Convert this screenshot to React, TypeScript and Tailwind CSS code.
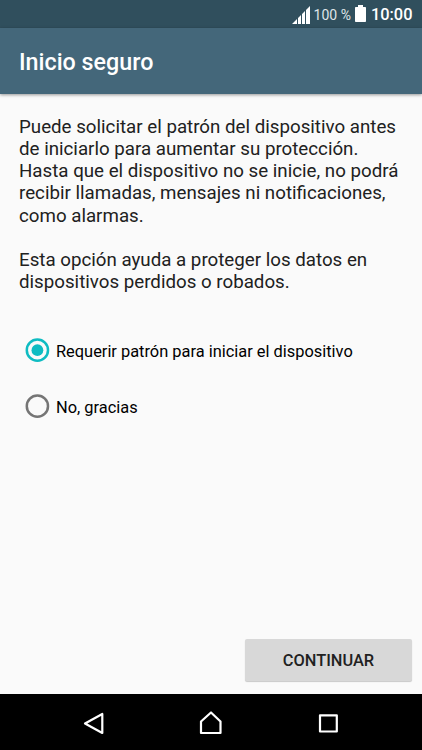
import React from "react";

function SignalIcon() {
  return (
    <svg width="18" height="18" viewBox="0 0 18 18" fill="#fff" className="mt-px shrink-0">
      <path d="M0 18L5 13V18ZM6 12L9 9V18H6ZM10 8L13 5V18H10ZM14 4L18 0V18H14Z" />
    </svg>
  );
}

function BatteryIcon() {
  return (
    <svg width="11" height="17" viewBox="0 0 11 17" fill="#fff" className="shrink-0">
      <path d="M3 0H8V2H10.2Q11 2 11 2.8V16.2Q11 17 10.2 17H0.8Q0 17 0 16.2V2.8Q0 2 0.8 2H3Z" />
    </svg>
  );
}

function Option({ label, selected = false }: { label: string; selected?: boolean }) {
  return (
    <div role="radio" aria-checked={selected} className="flex h-14 items-center pl-[25px]">
      <svg width="25" height="25" viewBox="0 0 25 25" fill="none" className="shrink-0">
        <circle cx="12.4" cy="12.2" r="10.6" stroke={selected ? "#0fbcc2" : "#757575"} strokeWidth="2.5" />
        {selected && <circle cx="12.4" cy="12.2" r="5.9" fill="#0fbcc2" />}
      </svg>
      <span className="ml-[6px] whitespace-nowrap pt-[3px] text-[16.4px] leading-5 text-black">{label}</span>
    </div>
  );
}

export default function App() {
  return (
    <div className="flex h-[750px] w-[422px] flex-col overflow-hidden bg-[#fafafa] font-['Roboto',sans-serif]">
      <div className="flex h-7 shrink-0 items-center justify-end bg-[#304f5d] pr-[9.5px] text-white">
        <SignalIcon />
        <span className="ml-[4px] whitespace-nowrap pt-px text-[14px] leading-5 text-[#dfe5e8]">100 %</span>
        <span className="ml-[4px] flex pb-px">
          <BatteryIcon />
        </span>
        <span className="ml-[5px] pt-[2px] text-[16.4px] font-medium leading-5">10:00</span>
      </div>
      <header className="z-10 flex h-[66px] shrink-0 items-center bg-[#44677a] pl-[19px] shadow-[0_1px_3px_rgba(0,0,0,0.4)]">
        <h1 className="pt-[2px] text-[23.3px] font-medium leading-7 text-white">Inicio seguro</h1>
      </header>
      <main className="flex min-h-0 flex-1 flex-col">
        <div className="whitespace-nowrap pl-[19px] pt-[21.5px] text-[18.73px] leading-[22.25px] text-[#212121]">
          <p>
            Puede solicitar el patrón del dispositivo antes
            <br />
            de iniciarlo para aumentar su protección.
            <br />
            Hasta que el dispositivo no se inicie, no podrá
            <br />
            recibir llamadas, mensajes ni notificaciones,
            <br />
            como alarmas.
          </p>
          <p className="mt-[22.25px]">
            Esta opción ayuda a proteger los datos en
            <br />
            dispositivos perdidos o robados.
          </p>
        </div>
        <div role="radiogroup" className="mt-[28.5px]">
          <Option label="Requerir patrón para iniciar el dispositivo" selected />
          <Option label="No, gracias" />
        </div>
        <div className="mt-auto flex justify-end pb-[13px] pr-[10px]">
          <button className="h-[42px] w-[167px] rounded-[2px] bg-[#d8d8d8] pt-px text-[16.4px] font-medium leading-5 text-[#212121] shadow-[0_1px_1px_rgba(0,0,0,0.2)]">
            CONTINUAR
          </button>
        </div>
      </main>
      <nav className="flex h-14 shrink-0 items-center bg-black pl-[82px]">
        <svg width="24" height="28" viewBox="0 0 24 28" fill="none" stroke="#fff" strokeWidth="2.2" strokeLinejoin="round">
          <path d="M3 15.5L20.3 6V25Z" />
        </svg>
        <svg width="24" height="28" viewBox="0 0 24 28" fill="none" stroke="#fff" strokeWidth="2.2" strokeLinejoin="round" className="ml-[93px]">
          <path d="M2 13.5L12 4.5L21.5 13.5V25H2Z" />
        </svg>
        <svg width="24" height="28" viewBox="0 0 24 28" fill="none" stroke="#fff" strokeWidth="2.2" strokeLinejoin="round" className="ml-[93px]">
          <path d="M4 7.3H20.8V23.5H4Z" />
        </svg>
      </nav>
    </div>
  );
}
